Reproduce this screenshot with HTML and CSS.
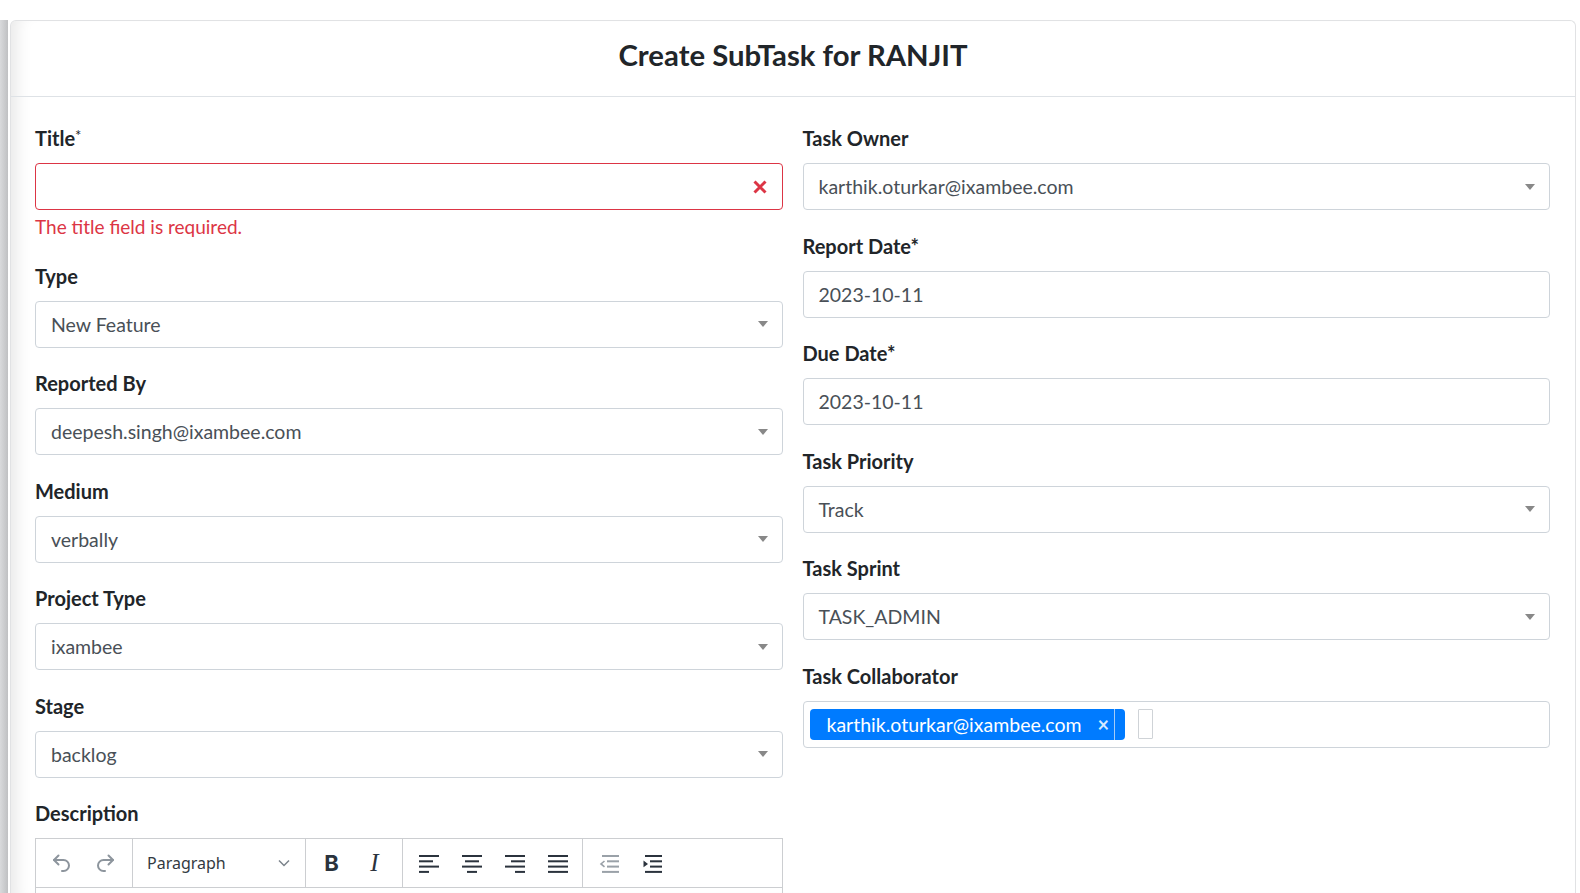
FILE: index.html
```html
<!DOCTYPE html>
<html lang="en">
<head>
<meta charset="utf-8">
<title>Create SubTask</title>
<link rel="stylesheet" href="styles.css">
</head>
<body>
<div class="page">
  <div class="backstrip"></div>
  <div class="modal">
    <div class="modal-header"><h1>Create SubTask for RANJIT</h1></div>
    <div class="modal-body">
      <div class="col">
        <div class="group">
          <label class="lbl">Title<span class="req-light">*</span></label>
          <div class="field invalid">
            <svg class="x-icon" viewBox="0 0 14 14" width="14" height="14"><path d="M1.5 1.5 12.5 12.5M12.5 1.5 1.5 12.5" stroke="#dc3545" stroke-width="3" stroke-linecap="butt" fill="none"/></svg>
          </div>
          <div class="err">The title field is required.</div>
        </div>
        <div class="group">
          <label class="lbl">Type</label>
          <div class="field"><span class="val">New Feature</span><span class="caret"></span></div>
        </div>
        <div class="group">
          <label class="lbl">Reported By</label>
          <div class="field"><span class="val">deepesh.singh@ixambee.com</span><span class="caret"></span></div>
        </div>
        <div class="group">
          <label class="lbl">Medium</label>
          <div class="field"><span class="val">verbally</span><span class="caret"></span></div>
        </div>
        <div class="group">
          <label class="lbl">Project Type</label>
          <div class="field"><span class="val">ixambee</span><span class="caret"></span></div>
        </div>
        <div class="group">
          <label class="lbl">Stage</label>
          <div class="field"><span class="val">backlog</span><span class="caret"></span></div>
        </div>
        <div class="group">
          <label class="lbl">Description</label>
          <div class="editor">
            <div class="toolbar">
              <div class="tgroup g1">
                <span class="tbtn"><svg viewBox="0 0 20 20" width="20" height="20" fill="none" stroke="#8d959d" stroke-width="2" stroke-linecap="round" stroke-linejoin="round"><path d="M6.5 11.5 2 7l4.5-4.5"/><path d="M2 7h9.5a5.5 5.5 0 0 1 0 11H10"/></svg></span>
                <span class="tbtn"><svg viewBox="0 0 20 20" width="20" height="20" fill="none" stroke="#8d959d" stroke-width="2" stroke-linecap="round" stroke-linejoin="round"><path d="M13.5 11.5 18 7l-4.5-4.5"/><path d="M18 7H8.5a5.5 5.5 0 0 0 0 11H10"/></svg></span>
              </div>
              <div class="tgroup g2">
                <span class="para">Paragraph</span>
                <svg class="chev" viewBox="0 0 12 8" width="12" height="8" fill="none" stroke="#7b838b" stroke-width="1.5"><path d="M1 1.5 6 6.5 11 1.5"/></svg>
              </div>
              <div class="tgroup g3">
                <span class="tbtn"><span class="bold-b">B</span></span>
                <span class="tbtn"><span class="ital-i">I</span></span>
              </div>
              <div class="tgroup g4">
                <span class="tbtn"><svg viewBox="0 0 20 20" width="20" height="20" fill="#2b333d"><rect x="0" y="2" width="20" height="2"/><rect x="0" y="7.3" width="14" height="2"/><rect x="0" y="12.6" width="20" height="2"/><rect x="0" y="17.9" width="10" height="2"/></svg></span>
                <span class="tbtn"><svg viewBox="0 0 20 20" width="20" height="20" fill="#2b333d"><rect x="0" y="2" width="20" height="2"/><rect x="3" y="7.3" width="14" height="2"/><rect x="0" y="12.6" width="20" height="2"/><rect x="5" y="17.9" width="10" height="2"/></svg></span>
                <span class="tbtn"><svg viewBox="0 0 20 20" width="20" height="20" fill="#2b333d"><rect x="0" y="2" width="20" height="2"/><rect x="6" y="7.3" width="14" height="2"/><rect x="0" y="12.6" width="20" height="2"/><rect x="10" y="17.9" width="10" height="2"/></svg></span>
                <span class="tbtn"><svg viewBox="0 0 20 20" width="20" height="20" fill="#2b333d"><rect x="0" y="2" width="20" height="2"/><rect x="0" y="7.3" width="20" height="2"/><rect x="0" y="12.6" width="20" height="2"/><rect x="0" y="17.9" width="20" height="2"/></svg></span>
              </div>
              <div class="tgroup g5">
                <span class="tbtn"><svg viewBox="0 0 20 20" width="20" height="20"><g fill="#9aa1a8"><rect x="3" y="2" width="17" height="2"/><rect x="8" y="7.3" width="12" height="2"/><rect x="8" y="12.6" width="12" height="2"/><rect x="3" y="17.9" width="17" height="2"/></g><path d="M5.5 8 2 10.9l3.5 2.9" fill="none" stroke="#9aa1a8" stroke-width="1.6"/></svg></span>
                <span class="tbtn"><svg viewBox="0 0 20 20" width="20" height="20"><g fill="#2b333d"><rect x="3" y="2" width="17" height="2"/><rect x="8" y="7.3" width="12" height="2"/><rect x="8" y="12.6" width="12" height="2"/><rect x="3" y="17.9" width="17" height="2"/><path d="M1.5 7.6 6 10.9l-4.5 3.3z"/></g></svg></span>
              </div>
            </div>
            <div class="editor-body"></div>
          </div>
        </div>
      </div>
      <div class="col">
        <div class="group">
          <label class="lbl">Task Owner</label>
          <div class="field"><span class="val">karthik.oturkar@ixambee.com</span><span class="caret"></span></div>
        </div>
        <div class="group">
          <label class="lbl">Report Date*</label>
          <div class="field"><span class="val">2023-10-11</span></div>
        </div>
        <div class="group">
          <label class="lbl">Due Date*</label>
          <div class="field"><span class="val">2023-10-11</span></div>
        </div>
        <div class="group">
          <label class="lbl">Task Priority</label>
          <div class="field"><span class="val">Track</span><span class="caret"></span></div>
        </div>
        <div class="group">
          <label class="lbl">Task Sprint</label>
          <div class="field"><span class="val">TASK_ADMIN</span><span class="caret"></span></div>
        </div>
        <div class="group">
          <label class="lbl">Task Collaborator</label>
          <div class="field multi">
            <span class="chip"><span class="chip-text">karthik.oturkar@ixambee.com</span><span class="chip-x">×</span><span class="chip-sep"></span></span>
            <span class="search-box"></span>
          </div>
        </div>
      </div>
    </div>
  </div>
</div>
</body>
</html>
```

FILE: styles.css
```css
html, body {
  margin: 0;
  padding: 0;
  background: #ffffff;
  overflow: hidden;
}

body {
  font-family: "Lato", "Liberation Sans", sans-serif;
  color: #212529;
}

.page {
  display: flex;
  height: 893px;
}

.backstrip {
  flex: none;
  width: 8px;
  margin-top: 20px;
  background: linear-gradient(to right, #d9dadc, #bfc0c2);
}

.modal {
  flex: none;
  box-sizing: border-box;
  width: 1566px;
  margin: 20px 0 0 2px;
  border: 1px solid #e1e2e4;
  border-bottom: none;
  border-radius: 6px 6px 0 0;
  background: #ffffff;
  box-shadow: inset 18px 0 16px -12px rgba(0, 0, 0, 0.09);
}

.modal-header {
  box-sizing: border-box;
  height: 76px;
  padding-bottom: 7px;
  border-bottom: 1px solid #dee2e6;
  display: flex;
  align-items: center;
  justify-content: center;
}

.modal-header h1 {
  margin: 0;
  font-size: 29.3px;
  line-height: 36px;
  font-weight: 700;
  color: #212529;
}

.modal-body {
  display: grid;
  grid-template-columns: 1fr 1fr;
  column-gap: 20px;
  padding: 29px 25px 0 24px;
}

.col {
  display: flex;
  flex-direction: column;
}

.group {
  margin-bottom: 23.5px;
}

.lbl {
  display: block;
  font-size: 20px;
  font-weight: 700;
  line-height: 24px;
  height: 24px;
  margin-bottom: 13px;
  color: #212529;
}

.req-light {
  font-weight: 400;
  font-size: 15px;
  line-height: 0;
  vertical-align: 5px;
}

.field {
  box-sizing: border-box;
  height: 47px;
  border: 1px solid #ced4da;
  border-radius: 4px;
  padding: 0 14px 0 15px;
  display: flex;
  align-items: center;
  font-size: 19.5px;
  color: #495057;
  background: #fff;
}

.field .val {
  flex: 1;
  white-space: nowrap;
}

.caret {
  flex: none;
  width: 0;
  height: 0;
  border-left: 5px solid transparent;
  border-right: 5px solid transparent;
  border-top: 6px solid #888888;
}

.field.invalid {
  border-color: #dc3545;
  justify-content: flex-end;
  padding-right: 15px;
}

.x-icon {
  display: block;
}

.err {
  margin-top: 3px;
  font-size: 19px;
  line-height: 27px;
  color: #dc3545;
}

.field.multi {
  padding: 0 6px;
  gap: 13px;
}

.chip {
  display: flex;
  align-items: center;
  height: 31px;
  background: #007bff;
  color: #ffffff;
  border-radius: 4px;
  padding-left: 17px;
}

.chip-text {
  font-size: 19.5px;
  white-space: nowrap;
}

.chip-x {
  margin-left: 16px;
  font-size: 20px;
  font-weight: 700;
  color: #d6e8ff;
  line-height: 1;
}

.chip-sep {
  width: 1px;
  align-self: stretch;
  background: #a5cbf6;
  margin: 0 10px 0 5px;
}

.search-box {
  box-sizing: border-box;
  width: 15px;
  height: 30px;
  border: 1px solid #cfd3d7;
  border-radius: 1px;
}

.editor {
  border: 1px solid #ccced1;
  border-bottom: none;
}

.toolbar {
  height: 48px;
  display: flex;
  border-bottom: 1px solid #ccced1;
}

.tgroup {
  display: flex;
  align-items: center;
  padding-left: 4px;
  box-sizing: border-box;
}

.tgroup + .tgroup {
  border-left: 1px solid #ccced1;
}

.g1 { width: 96px; }
.g2 { width: 173px; padding-left: 14px; padding-right: 15px; justify-content: space-between; }
.g3 { width: 97px; }
.g4 { width: 180px; }
.g5 { flex: 1; }

.tbtn {
  width: 43px;
  height: 48px;
  display: flex;
  align-items: center;
  justify-content: center;
}

.tbtn svg {
  display: block;
}

.para {
  font-family: "Noto Sans", "Open Sans", sans-serif;
  font-size: 16px;
  color: #333a42;
}

.chev {
  display: block;
}

.bold-b {
  font-family: "Inter", "Roboto", sans-serif;
  font-weight: 700;
  font-size: 22px;
  color: #2b333d;
}

.ital-i {
  font-family: "Liberation Serif", serif;
  font-style: italic;
  font-size: 25px;
  color: #2b333d;
}

.editor-body {
  height: 60px;
}
```
